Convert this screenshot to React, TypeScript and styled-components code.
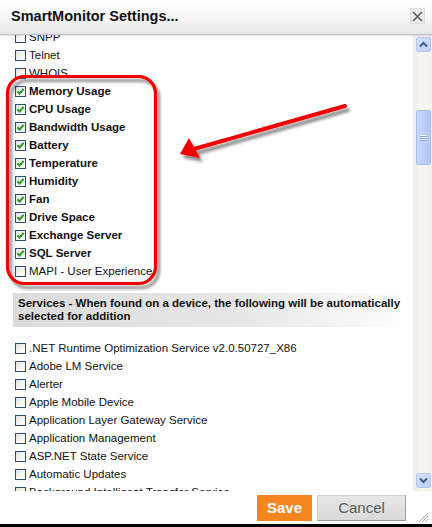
import React from "react";
import styled, { createGlobalStyle } from "styled-components";

const GlobalStyle = createGlobalStyle`
  html, body { margin: 0; padding: 0; background: #fff; overflow: hidden; }
  body { font-family: "Liberation Sans", Arial, sans-serif; }
  * { box-sizing: border-box; }
`;

const Dialog = styled.div`
  position: relative;
  width: 432px;
  height: 527px;
  display: flex;
  flex-direction: column;
  background: #fff;
  overflow: hidden;
`;

const TitleBar = styled.div`
  height: 35px;
  flex: none;
  display: flex;
  align-items: center;
  justify-content: space-between;
  padding: 0 7px 2px 11px;
  background: linear-gradient(#ffffff 0%, #f6f6f6 55%, #e6e6e6 100%);
  border-bottom: 1px solid #c4c4c4;
  box-shadow: 0 1px 1px rgba(0, 0, 0, 0.08);
  position: relative;
  z-index: 1;
`;

const Title = styled.h1`
  margin: 0;
  font-size: 14.5px;
  font-weight: bold;
  color: #111;
`;

const CloseButton = styled.div`
  width: 15px;
  height: 16px;
  display: flex;
  align-items: center;
  justify-content: center;
  background: #ececec;
  border: 1px solid #dedede;
`;

const Body = styled.div`
  height: 456px;
  flex: none;
  display: flex;
`;

const Viewport = styled.div`
  flex: 1;
  overflow: hidden;
`;

const List = styled.div<{ $offset?: number }>`
  margin-top: ${(p) => p.$offset ?? 0}px;
  display: flex;
  flex-direction: column;
`;

const Row = styled.label<{ $bold?: boolean }>`
  height: 18px;
  display: flex;
  align-items: center;
  padding-left: 15px;
  gap: 3px;
  font-size: 11.5px;
  font-weight: ${(p) => (p.$bold ? "bold" : "normal")};
  color: #111;
  white-space: nowrap;
`;

const Box = styled.span`
  width: 11px;
  height: 11px;
  flex: none;
  border: 1px solid #2a4e7a;
  background: linear-gradient(135deg, #e3e3de 0%, #f7f7f4 60%, #ffffff 100%);
  display: flex;
  align-items: center;
  justify-content: center;
`;

const SectionHeader = styled.div`
  margin: 13px 3px 12px 13px;
  height: 34px;
  padding: 3px 2px 3px 5px;
  display: flex;
  align-items: center;
  font-size: 11.5px;
  font-weight: bold;
  line-height: 13px;
  color: #111;
  background: linear-gradient(to right, #dcdcdc 0%, #e6e6e6 55%, #f6f6f6 85%, #ffffff 100%);
`;

const ScrollTrack = styled.div`
  width: 19px;
  flex: none;
  display: flex;
  flex-direction: column;
  align-items: center;
  padding: 2px 0 3px 1px;
  background: linear-gradient(to right, #eeede5, #f7f6f1 40%, #f3f2ec);
`;

const ScrollButton = styled.div`
  width: 15px;
  height: 15px;
  flex: none;
  border: 1px solid #b4c6f1;
  border-radius: 2px;
  background: linear-gradient(135deg, #d6e2fd, #bccdfa);
  display: flex;
  align-items: center;
  justify-content: center;
`;

const Thumb = styled.div<{ $top: number; $height: number }>`
  margin-top: ${(p) => p.$top}px;
  width: 15px;
  height: ${(p) => p.$height}px;
  flex: none;
  border: 1px solid #a9bdee;
  border-radius: 2px;
  background: linear-gradient(to right, #c6d6fd, #bacdfb 60%, #b2c6f8);
  display: flex;
  align-items: center;
  justify-content: center;
`;

const Spacer = styled.div`
  flex: 1;
`;

const Footer = styled.div`
  flex: 1;
  display: flex;
  justify-content: flex-end;
  align-items: flex-start;
  padding: 4px 3px 0 0;
  gap: 5px;
`;

const SaveButton = styled.button`
  width: 55px;
  height: 26px;
  border: none;
  background: #f5861f;
  color: #fff;
  font-family: "Liberation Sans", Arial, sans-serif;
  font-weight: bold;
  font-size: 15px;
  line-height: 26px;
  padding: 0;
`;

const CancelButton = styled.button`
  width: 89px;
  height: 26px;
  border: 1px solid #cfcfcf;
  border-right-color: #9c9c9c;
  border-bottom-color: #9c9c9c;
  background: linear-gradient(#e8e8e8, #dadada);
  color: #5a5a5a;
  font-family: "Liberation Sans", Arial, sans-serif;
  font-size: 15px;
  line-height: 24px;
  padding: 0;
`;

const Grip = styled.div`
  width: 12px;
  height: 12px;
  margin: 14px 0 0 6px;
  flex: none;
`;

const BottomLine = styled.div`
  height: 3px;
  flex: none;
  background: #000;
`;

const Overlay = styled.svg`
  position: absolute;
  left: 0;
  top: 0;
  pointer-events: none;
`;

const Check = () => (
  <svg width="9" height="9" viewBox="0 0 9 9">
    <path d="M1.5 4.2 L3.6 6.4 L7.6 1.8" fill="none" stroke="#1f9e1f" strokeWidth="2" />
  </svg>
);

const CheckItem = ({ label, checked, bold }: { label: string; checked?: boolean; bold?: boolean }) => (
  <Row $bold={bold}>
    <Box>{checked && <Check />}</Box>
    <span>{label}</span>
  </Row>
);

const monitors: { label: string; checked?: boolean; bold?: boolean }[] = [
  { label: "SNPP" },
  { label: "Telnet" },
  { label: "WHOIS" },
  { label: "Memory Usage", checked: true, bold: true },
  { label: "CPU Usage", checked: true, bold: true },
  { label: "Bandwidth Usage", checked: true, bold: true },
  { label: "Battery", checked: true, bold: true },
  { label: "Temperature", checked: true, bold: true },
  { label: "Humidity", checked: true, bold: true },
  { label: "Fan", checked: true, bold: true },
  { label: "Drive Space", checked: true, bold: true },
  { label: "Exchange Server", checked: true, bold: true },
  { label: "SQL Server", checked: true, bold: true },
  { label: "MAPI - User Experience" },
];

const services = [
  ".NET Runtime Optimization Service v2.0.50727_X86",
  "Adobe LM Service",
  "Alerter",
  "Apple Mobile Device",
  "Application Layer Gateway Service",
  "Application Management",
  "ASP.NET State Service",
  "Automatic Updates",
  "Background Intelligent Transfer Service",
];

export default function App() {
  return (
    <>
      <GlobalStyle />
      <Dialog>
        <TitleBar>
          <Title>SmartMonitor Settings...</Title>
          <CloseButton>
            <svg width="11" height="11" viewBox="0 0 11 11">
              <path d="M1 1 L10 10 M10 1 L1 10" stroke="#5c5c5c" strokeWidth="1.6" />
            </svg>
          </CloseButton>
        </TitleBar>
        <Body>
          <Viewport>
            <List $offset={-7}>
              {monitors.map((m) => (
                <CheckItem key={m.label} {...m} />
              ))}
              <SectionHeader>
                Services - When found on a device, the following will be automatically selected for addition
              </SectionHeader>
              {services.map((s) => (
                <CheckItem key={s} label={s} />
              ))}
            </List>
          </Viewport>
          <ScrollTrack>
            <ScrollButton>
              <svg width="9" height="7" viewBox="0 0 9 7">
                <path d="M1 5.5 L4.5 2 L8 5.5" fill="none" stroke="#3f5a8a" strokeWidth="2" />
              </svg>
            </ScrollButton>
            <Thumb $top={58} $height={55}>
              <svg width="7" height="8" viewBox="0 0 7 8">
                <path d="M0 1.5 H7 M0 3.5 H7 M0 5.5 H7" stroke="#eef3ff" strokeWidth="1" />
                <path d="M0 2.5 H7 M0 4.5 H7 M0 6.5 H7" stroke="#8fa6dc" strokeWidth="1" />
              </svg>
            </Thumb>
            <Spacer />
            <ScrollButton>
              <svg width="9" height="7" viewBox="0 0 9 7">
                <path d="M1 1.5 L4.5 5 L8 1.5" fill="none" stroke="#3f5a8a" strokeWidth="2" />
              </svg>
            </ScrollButton>
          </ScrollTrack>
        </Body>
        <Footer>
          <SaveButton>Save</SaveButton>
          <CancelButton>Cancel</CancelButton>
          <Grip>
            <svg width="12" height="12" viewBox="0 0 12 12">
              <path d="M11 2 L2 11 M11 5 L5 11 M11 8 L8 11" stroke="#a8a8a8" strokeWidth="1" />
              <path d="M11 3 L3 11 M11 6 L6 11 M11 9 L9 11" stroke="#ffffff" strokeWidth="1" />
            </svg>
          </Grip>
        </Footer>
        <BottomLine />
        <Overlay width="432" height="527" viewBox="0 0 432 527">
          <defs>
            <filter id="sh" x="-10%" y="-10%" width="130%" height="130%">
              <feGaussianBlur in="SourceAlpha" stdDeviation="1.6" />
              <feOffset dx="3" dy="4" result="b" />
              <feComponentTransfer>
                <feFuncA type="linear" slope="0.45" />
              </feComponentTransfer>
              <feMerge>
                <feMergeNode />
                <feMergeNode in="SourceGraphic" />
              </feMerge>
            </filter>
          </defs>
          <g filter="url(#sh)">
            <rect x="7.5" y="76.5" width="148" height="207" rx="17" ry="17" fill="none" stroke="#f20000" strokeWidth="3.2" />
          </g>
          <g filter="url(#sh)">
            <path d="M345 106 L194 149" stroke="#f20000" strokeWidth="4" strokeLinecap="round" />
            <path d="M180 154 L189 138 L200 158 Z" fill="#f20000" />
          </g>
        </Overlay>
      </Dialog>
    </>
  );
}
